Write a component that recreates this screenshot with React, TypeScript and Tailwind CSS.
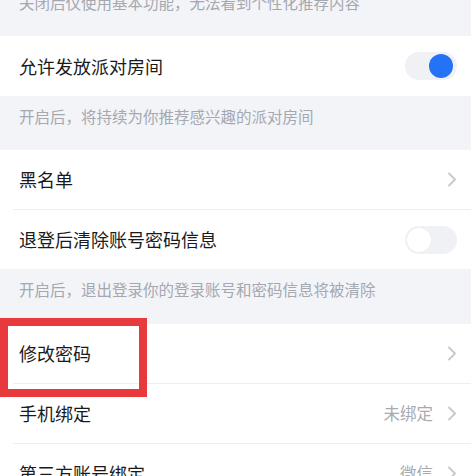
import { ReactNode } from 'react';

const Chevron = () => (
  <svg width="10" height="15" viewBox="0 0 10 15" fill="none" className="shrink-0">
    <path d="M2 1.5L8 7.5L2 13.5" stroke="#c6c8cd" strokeWidth="1.8" strokeLinecap="round" strokeLinejoin="round" />
  </svg>
);

const Toggle = ({ on }: { on: boolean }) => (
  <div className="relative h-[28px] w-[52px] shrink-0 rounded-full bg-[#eff1f5]">
    <div
      className={
        on
          ? 'absolute top-[2px] left-[24px] h-[24px] w-[24px] rounded-full bg-[#2472f6]'
          : 'absolute top-[2px] left-[2px] h-[24px] w-[24px] rounded-full bg-white shadow-[0_0_1px_rgba(0,0,0,0.06)]'
      }
    />
  </div>
);

const Note = ({ children, className = '' }: { children: ReactNode; className?: string }) => (
  <div className={`h-[54px] bg-[#f3f4f8] pl-[19px] pt-[8px] text-[15.5px] leading-[24px] text-[#a5a8b0] ${className}`}>
    {children}
  </div>
);

const Row = ({
  label,
  value,
  right,
  divider,
  children,
}: {
  label: string;
  value?: string;
  right: ReactNode;
  divider?: boolean;
  children?: ReactNode;
}) => (
  <div className="relative bg-white">
    <div className="flex h-[59px] items-center justify-between pl-[19px] pr-[14px]">
      <span className="text-[18px] text-[#1a1a1a]">{label}</span>
      <div className="flex items-center gap-[14px]">
        {value && <span className="text-[16.5px] text-[#a8aab0]">{value}</span>}
        {right}
      </div>
    </div>
    {divider && <div className="ml-[13px] h-px bg-[#efeff2]" />}
    {children}
  </div>
);

export default function App() {
  return (
    <div
      className="h-[476px] w-full overflow-hidden bg-[#f3f4f8]"
      style={{ fontFamily: '"Noto Sans CJK SC", "Noto Sans", sans-serif' }}
    >
      <Note className="-mt-[18px]">关闭后仅使用基本功能，无法看到个性化推荐内容</Note>

      <div className="bg-white">
        <div className="flex h-[60px] items-center justify-between pl-[19px] pr-[14px]">
          <span className="text-[18px] text-[#1a1a1a]">允许发放派对房间</span>
          <Toggle on />
        </div>
      </div>
      <Note className="h-[53px]">开启后，将持续为你推荐感兴趣的派对房间</Note>

      <Row label="黑名单" right={<Chevron />} divider />
      <Row label="退登后清除账号密码信息" right={<Toggle on={false} />} />
      <Note className="h-[55px]">开启后，退出登录你的登录账号和密码信息将被清除</Note>

      <Row label="修改密码" right={<Chevron />} divider>
        <div className="pointer-events-none absolute top-[-6px] left-0 z-10 h-[79px] w-[147px] border-[8px] border-[#e83a3c]" />
      </Row>
      <Row label="手机绑定" value="未绑定" right={<Chevron />} divider />
      <Row label="第三方账号绑定" value="微信" right={<Chevron />} />
    </div>
  );
}
